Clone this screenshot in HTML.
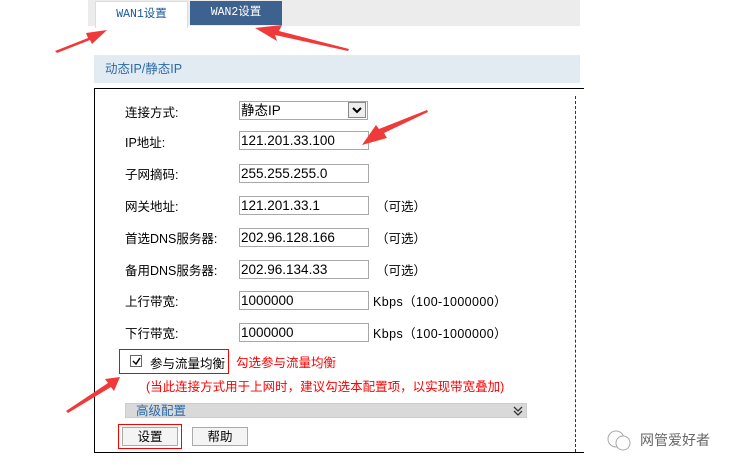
<!DOCTYPE html>
<html><head><meta charset="utf-8"><style>
body{margin:0;width:752px;height:474px;background:#fff;position:relative;overflow:hidden;font-family:"Liberation Sans","Noto Sans CJK SC",sans-serif;font-size:13px;color:#000}
.a{position:absolute}
.inp{position:absolute;left:239px;width:127px;height:17px;border:1px solid #a8a8a8;font-size:13.5px;line-height:17px;padding-left:1px;box-sizing:content-box}
.lbl{position:absolute;left:125px;font-size:12.5px}
.opt{position:absolute;left:376px;font-size:12.5px}
</style></head><body>
<div class="a" style="left:88px;top:0;width:492px;height:26px;background:#ececec"></div>
<div class="a" style="left:95px;top:1px;width:91px;height:26px;background:#fff;border:1px solid #ddd;border-bottom:none;color:#1a5a9a;font-family:'Liberation Mono','Noto Sans CJK SC',monospace;font-size:11.5px;text-align:center;line-height:26px">WAN1设置</div>
<div class="a" style="left:190px;top:1px;width:92px;height:24px;background:#3e6290;color:#fff;font-family:'Liberation Mono','Noto Sans CJK SC',monospace;font-size:11.5px;text-align:center;line-height:24px">WAN2设置</div>
<div class="a" style="left:94px;top:55px;width:486px;height:28px;background:#e3ebf2;color:#2a6aa8;line-height:28px;font-size:12.5px;padding-left:11px;box-sizing:border-box">动态IP/静态IP</div>
<div class="a" style="left:94px;top:88px;width:490px;height:365px;border:1px solid #000;border-right:none;box-sizing:border-box"></div>
<div class="a" style="left:575px;top:96px;height:356px;border-left:1px dashed #333"></div>

<div class="lbl" style="top:102px">连接方式:</div>
<div class="inp" style="top:101px;width:126px">静态IP</div>
<div class="a" style="left:348px;top:102px;width:18px;height:16px;background:#eee;border:1px solid #888;box-sizing:border-box"><svg width="16" height="14"><path d="M4 5 L8 9 L12 5" fill="none" stroke="#000" stroke-width="2"/></svg></div>
<div class="lbl" style="top:132px">IP地址:</div><div class="inp" style="top:131px">121.201.33.100</div>
<div class="lbl" style="top:164px">子网摘码:</div><div class="inp" style="top:164px">255.255.255.0</div>
<div class="lbl" style="top:196px">网关地址:</div><div class="inp" style="top:196px">121.201.33.1</div><div class="opt" style="top:196px">（可选）</div>
<div class="lbl" style="top:228px">首选DNS服务器:</div><div class="inp" style="top:228px">202.96.128.166</div><div class="opt" style="top:228px">（可选）</div>
<div class="lbl" style="top:260px">备用DNS服务器:</div><div class="inp" style="top:260px">202.96.134.33</div><div class="opt" style="top:260px">（可选）</div>
<div class="lbl" style="top:291px">上行带宽:</div><div class="inp" style="top:291px">1000000</div><div class="a" style="left:373px;top:291px;font-size:12.5px;letter-spacing:0.4px">Kbps（100-1000000）</div>
<div class="lbl" style="top:323px">下行带宽:</div><div class="inp" style="top:323px">1000000</div><div class="a" style="left:373px;top:323px;font-size:12.5px;letter-spacing:0.4px">Kbps（100-1000000）</div>

<div class="a" style="left:119px;top:349px;width:110px;height:25px;border:1px solid #f00;box-sizing:border-box"></div>
<div class="a" style="left:130px;top:355px;width:12px;height:12px;border:1px solid #666;box-sizing:border-box"><svg width="12" height="12"><path d="M2 5 L5 8 L9 2" fill="none" stroke="#000" stroke-width="1.5"/></svg></div>
<div class="a" style="left:150px;top:353px;font-size:12.5px">参与流量均衡</div>
<div class="a" style="left:236px;top:352px;color:#f00;font-size:12.5px">勾选参与流量均衡</div>
<div class="a" style="left:146px;top:376px;color:#f00;font-size:12.5px">(当此连接方式用于上网时，建议勾选本配置项，以实现带宽叠加)</div>
<div class="a" style="left:125px;top:403px;width:402px;height:15px;background:#d9d9d9;border:1px solid #ccc;box-sizing:border-box;color:#2a6aa8;font-size:12.5px;line-height:14px;padding-left:10px">高级配置<svg style="position:absolute;right:3px;top:1px" width="10" height="12"><path d="M1 2 L5 6 L9 2 M1 6 L5 10 L9 6" fill="none" stroke="#333" stroke-width="1.3"/></svg></div>
<div class="a" style="left:118px;top:424px;width:64px;height:25px;border:1px solid #f00;box-sizing:border-box"></div>
<div class="a" style="left:122px;top:427px;width:56px;height:19px;background:#f4f4f4;border:1px solid #aaa;box-sizing:border-box;text-align:center;line-height:18px;font-size:12.5px">设置</div>
<div class="a" style="left:192px;top:427px;width:56px;height:19px;background:#f4f4f4;border:1px solid #aaa;box-sizing:border-box;text-align:center;line-height:18px;font-size:12.5px">帮助</div>
<div class="a" style="left:640px;top:430px;color:#666;font-size:14px">网管爱好者</div>
<svg class="a" style="left:604px;top:428px" width="34" height="26"><circle cx="12" cy="11" r="8" fill="none" stroke="#aaa"/><circle cx="19" cy="15" r="7" fill="#fff" stroke="#aaa"/></svg>

<svg class="a" style="left:0;top:0" width="752" height="474">
<g fill="#f03a3a">
<polygon points="55,51 88,38 86,33 107,30 92,44 90,40 57,53"/>
<polygon points="348,51 275,35 277,41 255,28 282,25 279,31 349,49"/>
<polygon points="428,112 384,133 387,138 362,145 376,125 379,129 427,110"/>
<polygon points="66,411 108,383 105,379 120,377 114,391 111,387 68,413"/>
</g></svg>
</body></html>
